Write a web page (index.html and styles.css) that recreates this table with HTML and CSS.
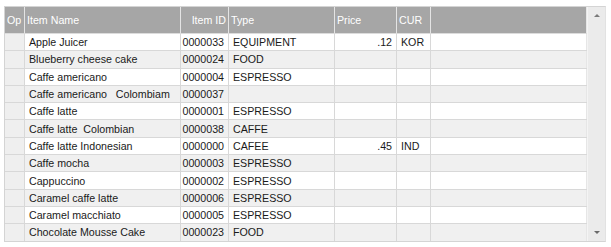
FILE: index.html
```html
<!DOCTYPE html>
<html>
<head>
<meta charset="utf-8">
<link rel="stylesheet" href="styles.css">
</head>
<body>
<div class="grid">
  <div class="main">
    <div class="row head">
      <div class="c">Op</div>
      <div class="c">Item Name</div>
      <div class="c r">Item ID</div>
      <div class="c">Type</div>
      <div class="c">Price</div>
      <div class="c">CUR</div>
      <div class="c last"></div>
    </div>
    <div class="row"><div class="c op"></div><div class="c">Apple Juicer</div><div class="c r">0000033</div><div class="c">EQUIPMENT</div><div class="c r">.12</div><div class="c">KOR</div><div class="c last"></div></div>
    <div class="row alt"><div class="c op"></div><div class="c">Blueberry cheese cake</div><div class="c r">0000024</div><div class="c">FOOD</div><div class="c r"></div><div class="c"></div><div class="c last"></div></div>
    <div class="row"><div class="c op"></div><div class="c">Caffe americano</div><div class="c r">0000004</div><div class="c">ESPRESSO</div><div class="c r"></div><div class="c"></div><div class="c last"></div></div>
    <div class="row alt"><div class="c op"></div><div class="c pre">Caffe americano   Colombiam</div><div class="c r">0000037</div><div class="c"></div><div class="c r"></div><div class="c"></div><div class="c last"></div></div>
    <div class="row"><div class="c op"></div><div class="c">Caffe latte</div><div class="c r">0000001</div><div class="c">ESPRESSO</div><div class="c r"></div><div class="c"></div><div class="c last"></div></div>
    <div class="row alt"><div class="c op"></div><div class="c pre">Caffe latte  Colombian</div><div class="c r">0000038</div><div class="c">CAFFE</div><div class="c r"></div><div class="c"></div><div class="c last"></div></div>
    <div class="row"><div class="c op"></div><div class="c">Caffe latte Indonesian</div><div class="c r">0000000</div><div class="c">CAFEE</div><div class="c r">.45</div><div class="c">IND</div><div class="c last"></div></div>
    <div class="row alt"><div class="c op"></div><div class="c">Caffe mocha</div><div class="c r">0000003</div><div class="c">ESPRESSO</div><div class="c r"></div><div class="c"></div><div class="c last"></div></div>
    <div class="row"><div class="c op"></div><div class="c">Cappuccino</div><div class="c r">0000002</div><div class="c">ESPRESSO</div><div class="c r"></div><div class="c"></div><div class="c last"></div></div>
    <div class="row alt"><div class="c op"></div><div class="c">Caramel caffe latte</div><div class="c r">0000006</div><div class="c">ESPRESSO</div><div class="c r"></div><div class="c"></div><div class="c last"></div></div>
    <div class="row"><div class="c op"></div><div class="c">Caramel macchiato</div><div class="c r">0000005</div><div class="c">ESPRESSO</div><div class="c r"></div><div class="c"></div><div class="c last"></div></div>
    <div class="row alt"><div class="c op"></div><div class="c">Chocolate Mousse Cake</div><div class="c r">0000023</div><div class="c">FOOD</div><div class="c r"></div><div class="c"></div><div class="c last"></div></div>
  </div>
  <div class="scroll">
    <span class="arrow up"></span>
    <span class="arrow down"></span>
  </div>
</div>
</body>
</html>
```

FILE: styles.css
```css
html, body {
  margin: 0;
  padding: 0;
  background: #ffffff;
}
body {
  padding: 6px 0 0 4px;
  font-family: "Liberation Sans", Arial, sans-serif;
  font-size: 10.67px;
  color: #1a1a1a;
}
.grid {
  display: flex;
  width: 600px;
  height: 234px;
  border: 1px solid #d4d4d4;
  border-right-color: #e2e2e2;
  overflow: hidden;
}
.main {
  width: 582px;
  display: flex;
  flex-direction: column;
}
.row {
  display: grid;
  grid-template-columns: 20px 156px 48px 106px 62px 34px 156px;
  height: 16.3px;
  flex: none;
  border-bottom: 1px solid #d8d8d8;
  background: #ffffff;
}
.row.alt {
  background: #f0f0f0;
}
.row.head {
  height: 26px;
  background: #a6a6a6;
  color: #ffffff;
  border-bottom: 1px solid #dcdcdc;
}
.c {
  border-right: 1px solid #d8d8d8;
  padding: 0 3px 0 4px;
  display: flex;
  align-items: center;
  white-space: nowrap;
  overflow: hidden;
}
.head .c {
  border-right-color: #e4e4e4;
  padding-left: 2px;
}
.head .c.r {
  padding-right: 2px;
}
.c.r {
  justify-content: flex-end;
  padding-right: 4px;
}
.c.pre {
  white-space: pre;
}
.c.op {
  background: #efefef;
}
.c.last {
  border-right-color: #e6e6e6;
}
.scroll {
  width: 18px;
  background: #ebebeb;
  border-left: 1px solid #f4f4f4;
  display: flex;
  flex-direction: column;
  justify-content: space-between;
  align-items: center;
  padding: 7px 0 7px;
}
.arrow {
  width: 0;
  height: 0;
  border-left: 3px solid transparent;
  border-right: 3px solid transparent;
}
.arrow.up {
  border-bottom: 3px solid #7a7a7a;
}
.arrow.down {
  border-top: 3px solid #6a6a6a;
}
```
